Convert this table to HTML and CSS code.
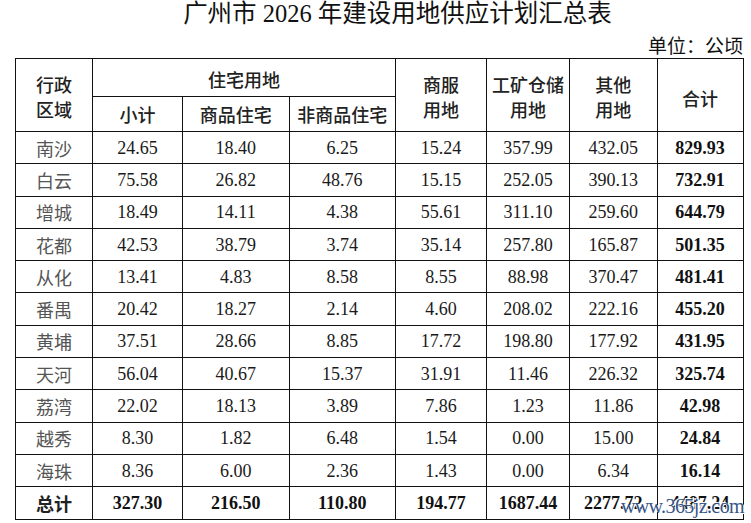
FILE: index.html
```html
<!DOCTYPE html>
<html lang="zh-CN">
<head>
<meta charset="utf-8">
<title>广州市2026年建设用地供应计划汇总表</title>
<link rel="stylesheet" href="styles.css">
</head>
<body>
<div class="page">
  <h1 class="title">广州市 2026 年建设用地供应计划汇总表</h1>
  <div class="unit">单位：公顷</div>
  <table class="sheet">
    <colgroup>
      <col class="c1"><col class="c2"><col class="c3"><col class="c4"><col class="c5"><col class="c6"><col class="c7"><col class="c8">
    </colgroup>
    <thead>
      <tr class="h1">
        <th rowspan="2">行政<br>区域</th>
        <th colspan="3">住宅用地</th>
        <th rowspan="2">商服<br>用地</th>
        <th rowspan="2">工矿仓储<br>用地</th>
        <th rowspan="2">其他<br>用地</th>
        <th rowspan="2" class="sum">合计</th>
      </tr>
      <tr class="h2">
        <th class="low">小计</th>
        <th class="low">商品住宅</th>
        <th class="low">非商品住宅</th>
      </tr>
    </thead>
    <tbody>
      <tr><td class="name">南沙</td><td>24.65</td><td>18.40</td><td>6.25</td><td>15.24</td><td>357.99</td><td>432.05</td><td class="b">829.93</td></tr>
      <tr><td class="name">白云</td><td>75.58</td><td>26.82</td><td>48.76</td><td>15.15</td><td>252.05</td><td>390.13</td><td class="b">732.91</td></tr>
      <tr><td class="name">增城</td><td>18.49</td><td>14.11</td><td>4.38</td><td>55.61</td><td>311.10</td><td>259.60</td><td class="b">644.79</td></tr>
      <tr><td class="name">花都</td><td>42.53</td><td>38.79</td><td>3.74</td><td>35.14</td><td>257.80</td><td>165.87</td><td class="b">501.35</td></tr>
      <tr><td class="name">从化</td><td>13.41</td><td>4.83</td><td>8.58</td><td>8.55</td><td>88.98</td><td>370.47</td><td class="b">481.41</td></tr>
      <tr><td class="name">番禺</td><td>20.42</td><td>18.27</td><td>2.14</td><td>4.60</td><td>208.02</td><td>222.16</td><td class="b">455.20</td></tr>
      <tr><td class="name">黄埔</td><td>37.51</td><td>28.66</td><td>8.85</td><td>17.72</td><td>198.80</td><td>177.92</td><td class="b">431.95</td></tr>
      <tr><td class="name">天河</td><td>56.04</td><td>40.67</td><td>15.37</td><td>31.91</td><td>11.46</td><td>226.32</td><td class="b">325.74</td></tr>
      <tr><td class="name">荔湾</td><td>22.02</td><td>18.13</td><td>3.89</td><td>7.86</td><td>1.23</td><td>11.86</td><td class="b">42.98</td></tr>
      <tr><td class="name">越秀</td><td>8.30</td><td>1.82</td><td>6.48</td><td>1.54</td><td>0.00</td><td>15.00</td><td class="b">24.84</td></tr>
      <tr><td class="name">海珠</td><td>8.36</td><td>6.00</td><td>2.36</td><td>1.43</td><td>0.00</td><td>6.34</td><td class="b">16.14</td></tr>
      <tr class="total"><td class="name tname">总计</td><td class="b">327.30</td><td class="b">216.50</td><td class="b">110.80</td><td class="b">194.77</td><td class="b">1687.44</td><td class="b">2277.72</td><td class="b">4487.24</td></tr>
    </tbody>
  </table>
  <span class="watermark">www.365jz.com</span>
</div>
</body>
</html>
```
FILE: styles.css
```css
html, body {
  margin: 0;
  padding: 0;
  background: #fff;
}
.page {
  position: relative;
  width: 751px;
  height: 523px;
  overflow: hidden;
  color: #1a1a1a;
}
.title {
  margin: 0;
  padding: 0 0 4px 44px;
  text-align: center;
  font-family: "Liberation Serif", "Noto Sans CJK SC", serif;
  font-weight: 400;
  font-size: 24.5px;
  line-height: 28px;
  color: #111;
}
.unit {
  height: 26px;
  line-height: 26px;
  padding-right: 8px;
  text-align: right;
  font-family: "Noto Sans CJK SC", sans-serif;
  font-size: 19px;
  color: #111;
}
.sheet {
  margin-left: 15px;
  width: 728px;
  table-layout: fixed;
  border-collapse: collapse;
  font-family: "Liberation Serif", "Noto Sans CJK SC", serif;
  font-size: 18px;
}
.c1 { width: 77px; }
.c2 { width: 90px; }
.c3 { width: 106.5px; }
.c4 { width: 106.5px; }
.c5 { width: 91px; }
.c6 { width: 83px; }
.c7 { width: 87.5px; }
.c8 { width: 86px; }
.sheet th, .sheet td {
  border: 1px solid #111;
  padding: 0;
  text-align: center;
  vertical-align: middle;
}
.sheet th {
  font-family: "Noto Sans CJK SC", sans-serif;
  font-weight: 500;
  line-height: 25px;
  color: #222;
  padding-top: 4px;
}
.sheet th.low {
  padding-top: 2px;
}
.sheet th.sum {
  padding-top: 6px;
}
.h1 { height: 37.5px; }
.h2 { height: 35.5px; }
.sheet tbody tr { height: 32.3px; }
.sheet td {
  line-height: 22px;
  color: #1a1a1a;
}
.sheet td.name {
  font-family: "Noto Sans CJK SC", sans-serif;
  color: #555;
  font-weight: 400;
}
.sheet td.tname {
  color: #222;
  font-weight: 700;
}
.sheet td.b {
  font-weight: 700;
  color: #111;
}
.watermark {
  position: absolute;
  right: 7px;
  top: 495px;
  font-family: "Liberation Serif", serif;
  font-size: 20px;
  line-height: 22px;
  color: #34558a;
  letter-spacing: -0.6px;
  text-shadow: 1px 1px 0 #fff, -1px -1px 0 #fff;
}
```
